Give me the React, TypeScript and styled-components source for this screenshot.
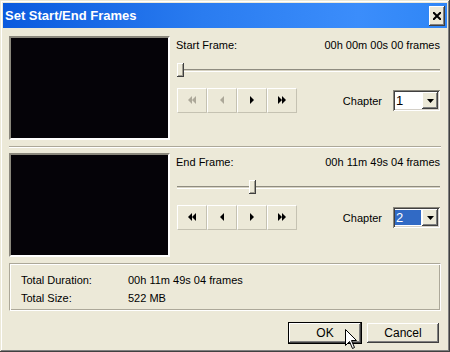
import styled, { createGlobalStyle } from "styled-components";

const GlobalStyle = createGlobalStyle`
  html, body {
    margin: 0;
    padding: 0;
    background: #ece9d8;
  }
  body {
    font-family: "Liberation Sans", Arial, sans-serif;
    font-size: 11px;
    color: #000;
  }
`;

// Window chrome
const Window = styled.div`
  position: relative;
  width: 450px;
  height: 352px;
  box-sizing: border-box;
  padding: 3px;
  background: #ece9d8;
  box-shadow: inset -1px -1px #404040, inset 1px 1px #ece9d8,
    inset -2px -2px #808080, inset 2px 2px #ffffff;
  overflow: hidden;
`;

const TitleBar = styled.div`
  height: 25px;
  display: flex;
  align-items: center;
  justify-content: space-between;
  padding: 0 2px 0 2px;
  background: linear-gradient(to right, #0a5ade 0%, #2a7cf0 45%, #3b8dfb 80%, #2f86f6 100%);
`;

const TitleText = styled.span`
  font-family: "Liberation Sans", Arial, sans-serif;
  font-weight: bold;
  font-size: 13px;
  color: #ffffff;
  letter-spacing: 0;
`;

const CloseButton = styled.div`
  width: 16px;
  height: 20px;
  display: flex;
  align-items: center;
  justify-content: center;
  background: #ece9d8;
  box-shadow: inset -1px -1px #404040, inset 1px 1px #ffffff,
    inset -2px -2px #808080;
`;

const Content = styled.div`
  padding: 8px 6px 0 6px;
`;

// Frame sections
const Section = styled.div`
  display: flex;
  gap: 6px;
  height: 104px;
`;

const Preview = styled.div`
  width: 161px;
  height: 104px;
  box-sizing: border-box;
  background: #050308;
  border-top: 2px solid #8a877c;
  border-left: 2px solid #8a877c;
  border-bottom: 2px solid #ffffff;
  border-right: 2px solid #ffffff;
  flex-shrink: 0;
`;

const Controls = styled.div`
  flex: 1;
  display: flex;
  flex-direction: column;
  padding-right: 1px;
`;

const LabelRow = styled.div`
  display: flex;
  justify-content: space-between;
  line-height: 13px;
  padding-top: 3px;
`;

const Slider = styled.div`
  position: relative;
  height: 20px;
  margin: 8px 0 0 1px;
`;

const Track = styled.div`
  position: absolute;
  left: 0;
  right: 0;
  top: 9px;
  height: 1px;
  border-top: 1px solid #8f8c80;
  border-bottom: 1px solid #ffffff;
  background: #d6d2c2;
`;

const Thumb = styled.div`
  position: absolute;
  top: 3px;
  width: 7px;
  height: 14px;
  box-sizing: border-box;
  background: #ece9d8;
  box-shadow: inset -1px -1px #404040, inset 1px 1px #ffffff,
    inset -2px -2px #a09d90;
`;

const ButtonRow = styled.div`
  display: flex;
  align-items: center;
  margin-top: 8px;
  height: 25px;
  padding-left: 1px;
`;

const Transport = styled.div`
  display: flex;
`;

const TransportButton = styled.div<{ $disabled?: boolean }>`
  width: 30px;
  height: 25px;
  box-sizing: border-box;
  display: flex;
  align-items: center;
  justify-content: center;
  border-top: 1px solid #ffffff;
  border-left: 1px solid #ffffff;
  border-bottom: 1px solid #c5c2b2;
  border-right: 1px solid #c5c2b2;
  color: ${(p) => (p.$disabled ? "#aca899" : "#000000")};
`;

const ChapterLabel = styled.span`
  margin-left: auto;
  margin-right: 11px;
`;

const Select = styled.div`
  width: 47px;
  height: 21px;
  box-sizing: border-box;
  display: flex;
  align-items: stretch;
  padding: 2px;
  background: #ffffff;
  box-shadow: inset 1px 1px #8a877c, inset -1px -1px #ffffff,
    inset 2px 2px #404040, inset -2px -2px #d4d0c8;
`;

const SelectValue = styled.div<{ $selected?: boolean }>`
  flex: 1;
  display: flex;
  align-items: center;
  padding-left: 1px;
  margin: 1px 1px 1px 0;
  font-size: 13px;
  background: ${(p) => (p.$selected ? "#316ac5" : "transparent")};
  color: ${(p) => (p.$selected ? "#ffffff" : "#000000")};
`;

const DropButton = styled.div`
  width: 16px;
  display: flex;
  align-items: center;
  justify-content: center;
  background: #ece9d8;
  box-shadow: inset -1px -1px #404040, inset 1px 1px #ffffff,
    inset -2px -2px #808080;
`;

const Separator = styled.div`
  margin: 6px 0 5px 0;
  height: 0;
  border-top: 1px solid #aca899;
  border-bottom: 1px solid #ffffff;
`;

// Totals group
const InfoGroup = styled.div`
  margin-top: 6px;
  height: 48px;
  box-sizing: border-box;
  padding: 7px 0 0 11px;
  border-top: 1px solid #aca899;
  border-left: 1px solid #aca899;
  border-bottom: 1px solid #ffffff;
  border-right: 1px solid #ffffff;
  box-shadow: inset 1px 1px #ffffff, inset -1px -1px #aca899;
`;

const InfoRow = styled.div`
  display: grid;
  grid-template-columns: 107px 1fr;
  line-height: 18px;
`;

const Footer = styled.div`
  display: flex;
  justify-content: flex-end;
  gap: 4px;
  margin-top: 11px;
  padding-right: 1px;
`;

const DialogButton = styled.div<{ $default?: boolean }>`
  width: 74px;
  height: 22px;
  box-sizing: border-box;
  display: flex;
  align-items: center;
  justify-content: center;
  font-size: 12px;
  background: #ece9d8;
  border: 1px solid ${(p) => (p.$default ? "#000000" : "transparent")};
  box-shadow: ${(p) =>
    p.$default
      ? "inset -1px -1px #404040, inset 1px 1px #ffffff, inset -2px -2px #808080"
      : "inset -1px -1px #404040, inset 1px 1px #ffffff, inset -2px -2px #808080"};
`;

const Cursor = styled.svg`
  position: absolute;
  left: 345px;
  top: 329px;
`;

const Icon = ({ kind }: { kind: "rew" | "back" | "play" | "ff" }) => {
  const shapes: Record<string, string> = {
    rew: "M0 4 L4 0 L4 8 Z M4 4 L8 0 L8 8 Z",
    back: "M0 4 L4 0 L4 8 Z",
    play: "M0 0 L4 4 L0 8 Z",
    ff: "M0 0 L4 4 L0 8 Z M4 0 L8 4 L4 8 Z",
  };
  const w = kind === "back" || kind === "play" ? 5 : 9;
  return (
    <svg width={w} height={9} viewBox={`0 0 ${w} 9`}>
      <path d={shapes[kind]} fill="currentColor" />
    </svg>
  );
};

const DownArrow = () => (
  <svg width="7" height="4" viewBox="0 0 7 4">
    <path d="M0 0 H7 L3.5 4 Z" fill="#000" />
  </svg>
);

type FrameProps = {
  label: string;
  time: string;
  pos: number;
  chapter: string;
  disabledBack?: boolean;
  selected?: boolean;
};

const FrameSection = ({ label, time, pos, chapter, disabledBack, selected }: FrameProps) => (
  <Section>
    <Preview />
    <Controls>
      <LabelRow>
        <span>{label}</span>
        <span>{time}</span>
      </LabelRow>
      <Slider>
        <Track />
        <Thumb style={{ left: pos }} />
      </Slider>
      <ButtonRow>
        <Transport>
          <TransportButton $disabled={disabledBack}>
            <Icon kind="rew" />
          </TransportButton>
          <TransportButton $disabled={disabledBack}>
            <Icon kind="back" />
          </TransportButton>
          <TransportButton>
            <Icon kind="play" />
          </TransportButton>
          <TransportButton>
            <Icon kind="ff" />
          </TransportButton>
        </Transport>
        <ChapterLabel>Chapter</ChapterLabel>
        <Select>
          <SelectValue $selected={selected}>{chapter}</SelectValue>
          <DropButton>
            <DownArrow />
          </DropButton>
        </Select>
      </ButtonRow>
    </Controls>
  </Section>
);

export default function App() {
  return (
    <>
      <GlobalStyle />
      <Window>
        <TitleBar>
          <TitleText>Set Start/End Frames</TitleText>
          <CloseButton>
            <svg width="8" height="8" viewBox="0 0 8 8">
              <path d="M0 0 L8 8 M8 0 L0 8" stroke="#000" strokeWidth="2" />
            </svg>
          </CloseButton>
        </TitleBar>
        <Content>
          <FrameSection
            label="Start Frame:"
            time="00h 00m 00s 00 frames"
            pos={0}
            chapter="1"
            disabledBack
          />
          <Separator />
          <FrameSection
            label="End Frame:"
            time="00h 11m 49s 04 frames"
            pos={72}
            chapter="2"
            selected
          />
          <InfoGroup>
            <InfoRow>
              <span>Total Duration:</span>
              <span>00h 11m 49s 04 frames</span>
            </InfoRow>
            <InfoRow>
              <span>Total Size:</span>
              <span>522 MB</span>
            </InfoRow>
          </InfoGroup>
          <Footer>
            <DialogButton $default>OK</DialogButton>
            <DialogButton>Cancel</DialogButton>
          </Footer>
        </Content>
        <Cursor width="13" height="21" viewBox="0 0 13 21">
          <path
            d="M0.5 0.5 L0.5 16.5 L4.5 12.5 L7.5 19.5 L9.5 18.5 L6.5 11.5 L11.5 11.5 Z"
            fill="#fff"
            stroke="#000"
            strokeWidth="1"
          />
        </Cursor>
      </Window>
    </>
  );
}
